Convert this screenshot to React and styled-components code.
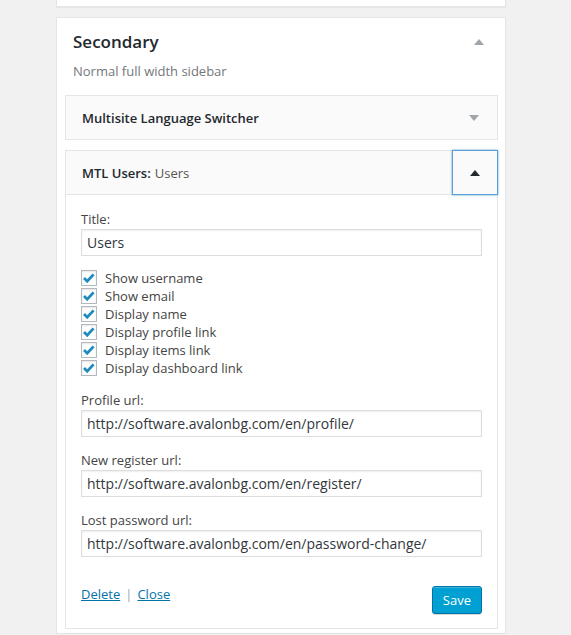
import React from 'react';
import styled, { createGlobalStyle } from 'styled-components';

const GlobalStyle = createGlobalStyle`
  html, body {
    margin: 0;
    padding: 0;
    background: #f1f1f1;
    overflow: hidden;
  }
  body {
    font-family: "Open Sans", "Liberation Sans", sans-serif;
    font-size: 13px;
    color: #444;
  }
`;

const Column = styled.div`
  width: 450px;
  margin-left: 56px;
  display: flex;
  flex-direction: column;
  gap: 10px;
`;

const Card = styled.div`
  background: #fff;
  border: 1px solid #e5e5e5;
  box-shadow: 0 1px 1px rgba(0, 0, 0, 0.04);
  box-sizing: border-box;
`;

const TopCard = styled(Card)`
  height: 7px;
  border-top: none;
`;

const SidebarCard = styled(Card)`
  padding: 12px 7px 4px 8px;
`;

const SidebarHeader = styled.div`
  display: flex;
  justify-content: space-between;
  align-items: center;
  padding: 0 14px 0 8px;
`;

const SidebarTitle = styled.h2`
  margin: 0;
  font-size: 17px;
  line-height: 24px;
  font-weight: 600;
  color: #23282d;
`;

const Description = styled.p`
  margin: 7px 0 14px 8px;
  line-height: 20px;
  color: #72777c;
`;

const Caret = styled.span`
  width: 0;
  height: 0;
  border-left: 5px solid transparent;
  border-right: 5px solid transparent;
  ${(p) =>
    p.$down
      ? `border-top: 6px solid ${p.$color || '#a0a5aa'};`
      : `border-bottom: 6px solid ${p.$color || '#a0a5aa'};`}
`;

const Widget = styled.div`
  border: 1px solid #e5e5e5;
  background: #fff;
  margin-bottom: 10px;
  &:last-child {
    margin-bottom: 0;
  }
`;

const WidgetTop = styled.div`
  display: flex;
  align-items: stretch;
  height: 43px;
  background: #fafafa;
  border-bottom: ${(p) => (p.$open ? '1px solid #e5e5e5' : 'none')};
`;

const WidgetTitle = styled.h3`
  flex: 1;
  margin: 0;
  padding: 0 16px;
  display: flex;
  align-items: center;
  font-size: 13px;
  font-weight: 600;
  color: #23282d;
  span {
    font-weight: 400;
    color: #555;
    margin-left: 4px;
  }
`;

const Toggle = styled.button`
  width: 46px;
  margin: ${(p) => (p.$focus ? '-1px -1px -1px 0' : '0')};
  height: ${(p) => (p.$focus ? '45px' : 'auto')};
  padding: 0;
  display: flex;
  align-items: center;
  justify-content: center;
  background: transparent;
  border: ${(p) => (p.$focus ? '1px solid #5b9dd9' : '1px solid transparent')};
  box-shadow: ${(p) => (p.$focus ? '0 0 2px rgba(30, 140, 190, 0.8)' : 'none')};
  box-sizing: border-box;
  cursor: pointer;
`;

const WidgetInside = styled.div`
  padding: 15px 15px 14px 15px;
`;

const FieldLabel = styled.label`
  display: block;
  line-height: 18px;
  margin-bottom: 1px;
  color: #444;
`;

const Field = styled.div`
  margin-bottom: ${(p) => p.$gap || 14}px;
`;

const TextInput = styled.input`
  display: block;
  width: 100%;
  height: 27px;
  box-sizing: border-box;
  padding: 3px 5px;
  margin: 0;
  border: 1px solid #ddd;
  box-shadow: inset 0 1px 2px rgba(0, 0, 0, 0.07);
  background: #fff;
  color: #32373c;
  font-family: "Open Sans", "Liberation Sans", sans-serif;
  font-size: 14px;
  outline: none;
`;

const CheckList = styled.div`
  display: flex;
  flex-direction: column;
  margin-bottom: 14px;
`;

const CheckRow = styled.label`
  display: flex;
  align-items: center;
  height: 18px;
  gap: 8px;
  color: #444;
`;

const CheckBox = styled.span`
  width: 16px;
  height: 16px;
  box-sizing: border-box;
  border: 1px solid #b4b9be;
  background: #fff;
  box-shadow: inset 0 1px 2px rgba(0, 0, 0, 0.1);
  display: flex;
  align-items: center;
  justify-content: center;
  margin-top: -1px;
`;

const Actions = styled.div`
  display: flex;
  justify-content: space-between;
  align-items: flex-start;
  margin-top: 29px;
`;

const Links = styled.div`
  line-height: 18px;
  margin-top: -1px;
  color: #a0a5aa;
  a {
    color: #0073aa;
    text-decoration: underline;
  }
  span {
    margin: 0 5px;
  }
`;

const SaveButton = styled.button`
  height: 28px;
  padding: 0 10px 1px;
  background: #00a0d2;
  border: 1px solid #0073aa;
  border-radius: 3px;
  box-shadow: inset 0 1px 0 rgba(120, 200, 230, 0.5), 0 1px 0 rgba(0, 0, 0, 0.15);
  color: #fff;
  font-family: "Open Sans", "Liberation Sans", sans-serif;
  font-size: 13px;
  line-height: 26px;
  cursor: pointer;
`;

const Check = () => (
  <svg width="14" height="14" viewBox="0 0 14 14">
    <path d="M2 7 L5.2 10.2 L11.6 3.4" fill="none" stroke="#1e8cbe" strokeWidth="2.8" />
  </svg>
);

const checks = [
  'Show username',
  'Show email',
  'Display name',
  'Display profile link',
  'Display items link',
  'Display dashboard link',
];

const urls = [
  ['Profile url:', 'http://software.avalonbg.com/en/profile/'],
  ['New register url:', 'http://software.avalonbg.com/en/register/'],
  ['Lost password url:', 'http://software.avalonbg.com/en/password-change/'],
];

export default function App() {
  return (
    <>
      <GlobalStyle />
      <Column>
        <TopCard />
        <SidebarCard>
          <SidebarHeader>
            <SidebarTitle>Secondary</SidebarTitle>
            <Caret />
          </SidebarHeader>
          <Description>Normal full width sidebar</Description>

          <Widget>
            <WidgetTop>
              <WidgetTitle>Multisite Language Switcher</WidgetTitle>
              <Toggle>
                <Caret $down />
              </Toggle>
            </WidgetTop>
          </Widget>

          <Widget>
            <WidgetTop $open>
              <WidgetTitle>
                MTL Users:<span>Users</span>
              </WidgetTitle>
              <Toggle $focus>
                <Caret $color="#23282d" />
              </Toggle>
            </WidgetTop>
            <WidgetInside>
              <Field $gap={13}>
                <FieldLabel>Title:</FieldLabel>
                <TextInput defaultValue="Users" />
              </Field>
              <CheckList>
                {checks.map((c) => (
                  <CheckRow key={c}>
                    <CheckBox>
                      <Check />
                    </CheckBox>
                    {c}
                  </CheckRow>
                ))}
              </CheckList>
              {urls.map(([label, value], i) => (
                <Field key={label} $gap={i === urls.length - 1 ? 0 : 14}>
                  <FieldLabel>{label}</FieldLabel>
                  <TextInput defaultValue={value} />
                </Field>
              ))}
              <Actions>
                <Links>
                  <a href="#">Delete</a>
                  <span>|</span>
                  <a href="#">Close</a>
                </Links>
                <SaveButton>Save</SaveButton>
              </Actions>
            </WidgetInside>
          </Widget>
        </SidebarCard>
      </Column>
    </>
  );
}
